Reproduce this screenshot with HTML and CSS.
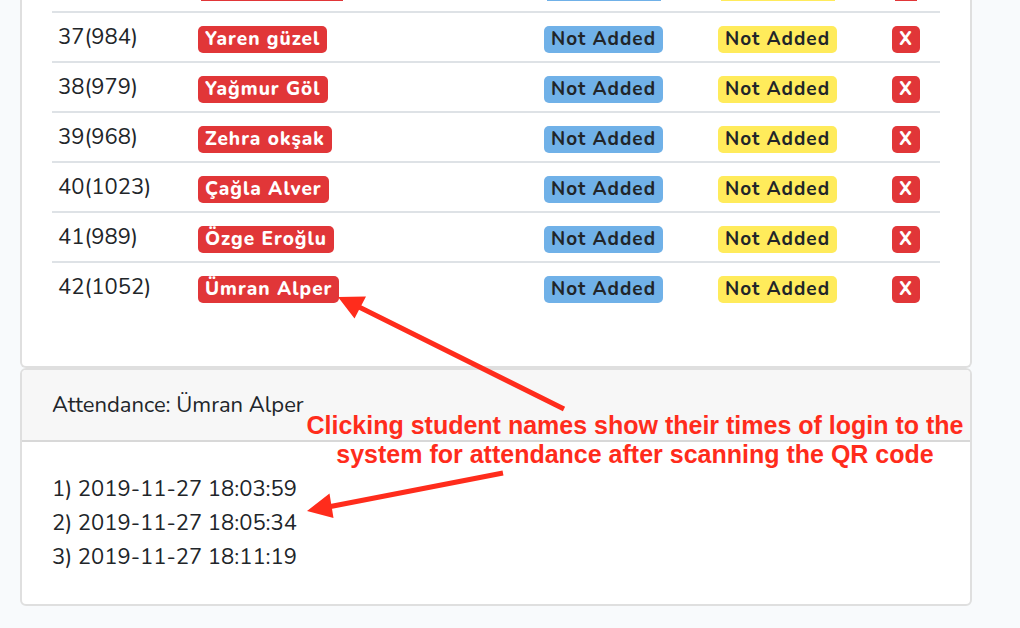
FILE: index.html
```html
<!DOCTYPE html>
<html lang="en">
<head>
<meta charset="utf-8">
<meta name="viewport" content="width=device-width, initial-scale=1">
<title>Attendance</title>
<link rel="stylesheet" href="styles.css">
</head>
<body>
<main class="page">
  <section class="card roster">
    <table class="students">
      <colgroup><col class="col-no"><col><col class="col-status"><col class="col-status"><col class="col-remove"></colgroup>
      <tbody>
        <tr class="scrolled"><td></td><td><div class="edge edge-name"></div></td><td><div class="edge edge-info"></div></td><td><div class="edge edge-warn"></div></td><td><div class="edge edge-x"></div></td></tr>
        <tr><td class="number">37(984)</td><td><button class="badge danger">Yaren güzel</button></td><td><span class="badge info">Not Added</span></td><td><span class="badge warn">Not Added</span></td><td><button class="badge danger">X</button></td></tr>
        <tr><td class="number">38(979)</td><td><button class="badge danger">Yağmur Göl</button></td><td><span class="badge info">Not Added</span></td><td><span class="badge warn">Not Added</span></td><td><button class="badge danger">X</button></td></tr>
        <tr><td class="number">39(968)</td><td><button class="badge danger">Zehra okşak</button></td><td><span class="badge info">Not Added</span></td><td><span class="badge warn">Not Added</span></td><td><button class="badge danger">X</button></td></tr>
        <tr><td class="number">40(1023)</td><td><button class="badge danger">Çağla Alver</button></td><td><span class="badge info">Not Added</span></td><td><span class="badge warn">Not Added</span></td><td><button class="badge danger">X</button></td></tr>
        <tr><td class="number">41(989)</td><td><button class="badge danger">Özge Eroğlu</button></td><td><span class="badge info">Not Added</span></td><td><span class="badge warn">Not Added</span></td><td><button class="badge danger">X</button></td></tr>
        <tr><td class="number">42(1052)</td><td><button class="badge danger">Ümran Alper</button></td><td><span class="badge info">Not Added</span></td><td><span class="badge warn">Not Added</span></td><td><button class="badge danger">X</button></td></tr>
      </tbody>
    </table>
  </section>
  <section class="card">
    <header class="card-header">Attendance: Ümran Alper</header>
    <div class="card-body">
      <div>1) 2019-11-27 18:03:59</div>
      <div>2) 2019-11-27 18:05:34</div>
      <div>3) 2019-11-27 18:11:19</div>
    </div>
  </section>
  <svg class="arrows" width="600" height="560" viewBox="0 0 600 560" aria-hidden="true">
    <path d="M564 409 357 306M503 473 328 507" fill="none" stroke="#ff2c1c" stroke-width="5"/>
    <path d="M338 297 366 296.500 354.500 318.500ZM307 511 329.500 493.500 333.500 518Z" fill="#ff2c1c"/>
  </svg>
  <p class="note">Clicking student names show their times of login to the<br>system for attendance after scanning the QR code</p>
</main>
</body>
</html>
```
FILE: styles.css
```css
* { box-sizing: border-box; }

body {
  margin: 0;
  background: #f8fafc;
  color: #212529;
  font-family: Nunito, Lato, sans-serif;
  font-size: 22px;
  line-height: 34px;
}

.page {
  position: relative;
  padding: 0 48px 22px 20px;
}

.card {
  background: #fff;
  border: 2px solid #dfdfdf;
  border-radius: 6px;
}

.roster {
  border-top: 0;
  border-top-left-radius: 0;
  border-top-right-radius: 0;
  padding: 0 30px 55px;
}

.students {
  width: 100%;
  table-layout: fixed;
  border-collapse: separate;
  border-spacing: 0;
}

.col-no { width: 140px; }
.col-status { width: 174px; }
.col-remove { width: 54px; }

.students td {
  height: 50px;
  padding: 13px 6px 8px;
  border-top: 2px solid #dee2e6;
  vertical-align: top;
  line-height: 0;
}

.students .number {
  padding: 7px 6px;
  line-height: 34px;
}

.students .scrolled td {
  height: 11px;
  padding: 0 6px;
  border: 0;
}

.edge { height: 1px; margin-left: 3px; }
.edge-name { width: 142px; background: #e13638; }
.edge-info { width: 114px; background: #70b1e8; }
.edge-warn { width: 114px; background: #ffeb5b; }
.edge-x { width: 22px; background: #e13638; }

.badge {
  display: inline-block;
  margin: 0;
  padding: 2px 7px 3px;
  border: 0;
  border-radius: 5px;
  color: #212529;
  font-family: inherit;
  font-size: 19px;
  font-weight: 700;
  letter-spacing: 1px;
  line-height: 22px;
  white-space: nowrap;
}

.danger { background: #e13638; color: #fff; font-weight: 800; cursor: pointer; }
.info { background: #70b1e8; }
.warn { background: #ffeb5b; }

.card-header {
  padding: 18px 30px;
  background: #f7f7f7;
  border-bottom: 2px solid #d8d8d8;
  border-radius: 4px 4px 0 0;
}

.card-body { padding: 30px; }

.arrows {
  position: absolute;
  top: 0;
  left: 0;
}

.note {
  position: absolute;
  top: 411px;
  left: 300px;
  width: 670px;
  margin: 0;
  color: #ff2c1c;
  font: bold 25px/29px "Liberation Sans", Arial, sans-serif;
  text-align: center;
  white-space: nowrap;
}
```
